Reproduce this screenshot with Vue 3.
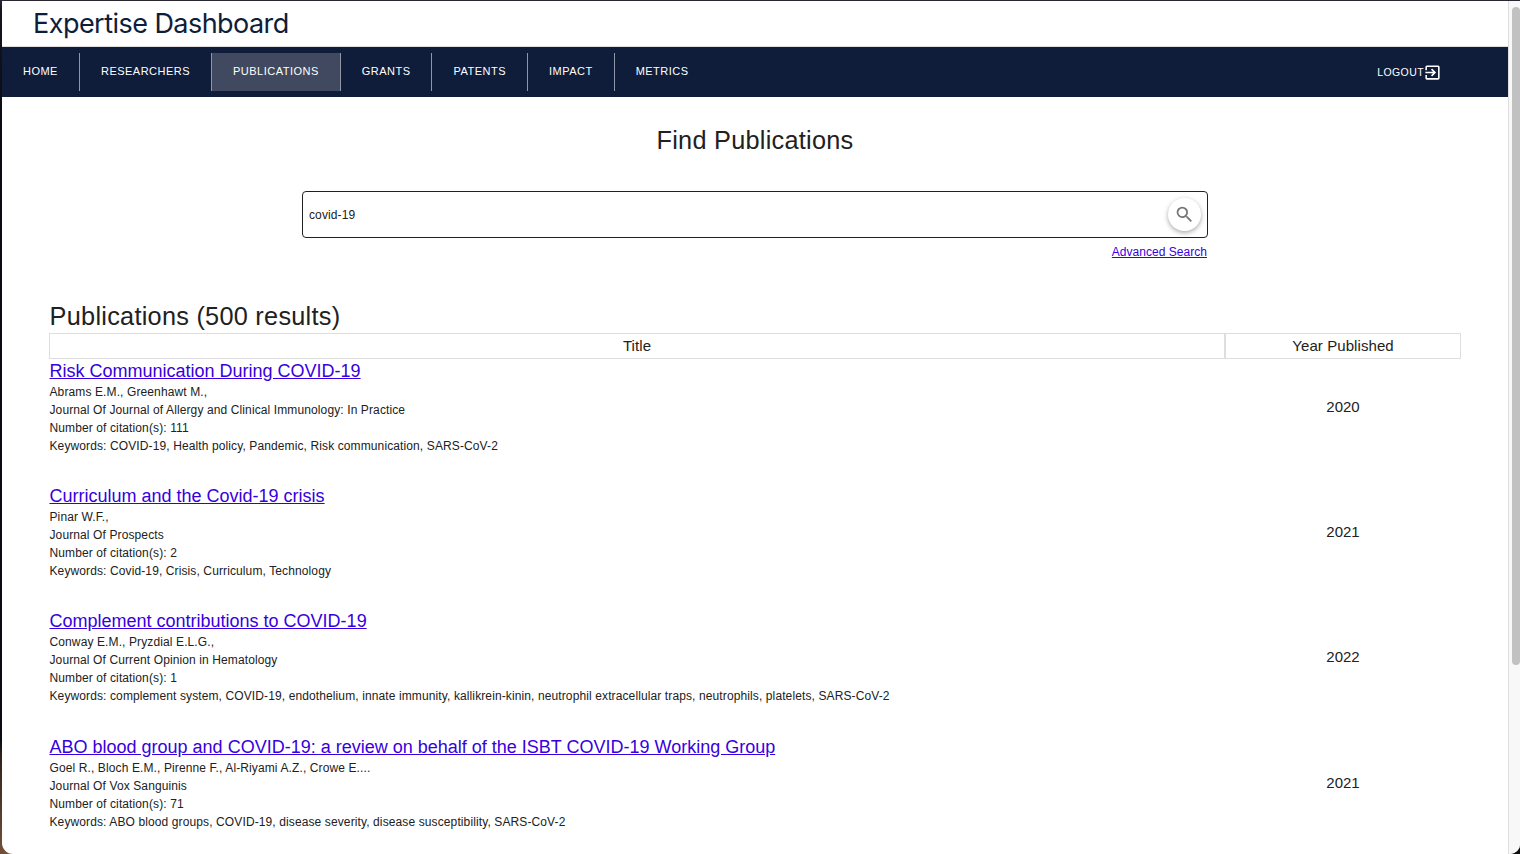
<script setup>
const nav = ['Home', 'Researchers', 'Publications', 'Grants', 'Patents', 'Impact', 'Metrics']
const active = 'Publications'
const publications = [
  {
    title: 'Risk Communication During COVID-19',
    authors: 'Abrams E.M., Greenhawt M.,',
    journal: 'Journal of Allergy and Clinical Immunology: In Practice',
    citations: 111,
    keywords: 'COVID-19, Health policy, Pandemic, Risk communication, SARS-CoV-2',
    year: 2020,
  },
  {
    title: 'Curriculum and the Covid-19 crisis',
    authors: 'Pinar W.F.,',
    journal: 'Prospects',
    citations: 2,
    keywords: 'Covid-19, Crisis, Curriculum, Technology',
    year: 2021,
  },
  {
    title: 'Complement contributions to COVID-19',
    authors: 'Conway E.M., Pryzdial E.L.G.,',
    journal: 'Current Opinion in Hematology',
    citations: 1,
    keywords:
      'complement system, COVID-19, endothelium, innate immunity, kallikrein-kinin, neutrophil extracellular traps, neutrophils, platelets, SARS-CoV-2',
    year: 2022,
  },
  {
    title: 'ABO blood group and COVID-19: a review on behalf of the ISBT COVID-19 Working Group',
    authors: 'Goel R., Bloch E.M., Pirenne F., Al-Riyami A.Z., Crowe E....',
    journal: 'Vox Sanguinis',
    citations: 71,
    keywords: 'ABO blood groups, COVID-19, disease severity, disease susceptibility, SARS-CoV-2',
    year: 2021,
  },
]
</script>

<template>
  <div class="desktop">
    <div class="window">
      <div class="page">
        <header class="brand"><span>Expertise Dashboard</span></header>
        <nav class="bar">
          <a v-for="item in nav" :key="item" class="item" :class="{ active: item === active }">{{ item }}</a>
          <a class="logout">
            <span>Logout</span>
            <svg viewBox="0 0 24 24" width="19" height="19">
              <path fill="currentColor" d="M10.09 15.59L11.5 17l5-5-5-5-1.41 1.41L12.67 11H3v2h9.67l-2.58 2.59zM19 3H5a2 2 0 0 0-2 2v4h2V5h14v14H5v-4H3v4a2 2 0 0 0 2 2h14a2 2 0 0 0 2-2V5a2 2 0 0 0-2-2z" />
            </svg>
          </a>
        </nav>
        <main>
          <h1>Find Publications</h1>
          <div class="search">
            <span>covid-19</span>
            <button type="button" aria-label="Search">
              <svg viewBox="0 0 24 24" width="21" height="21">
                <path fill="currentColor" d="M15.5 14h-.79l-.28-.27A6.47 6.47 0 0 0 16 9.5 6.5 6.5 0 1 0 9.5 16c1.61 0 3.09-.59 4.23-1.57l.27.28v.79l5 4.99L20.49 19l-4.99-5zm-6 0C7.01 14 5 11.99 5 9.5S7.01 5 9.5 5 14 7.01 14 9.5 11.99 14 9.5 14z" />
              </svg>
            </button>
          </div>
          <div class="advanced"><a>Advanced Search</a></div>
          <h2>Publications (500 results)</h2>
          <div class="row head">
            <div>Title</div>
            <div>Year Published</div>
          </div>
          <article v-for="p in publications" :key="p.title" class="row">
            <div class="details">
              <h3>{{ p.title }}</h3>
              <p>{{ p.authors }}</p>
              <p>Journal Of {{ p.journal }}</p>
              <p>Number of citation(s): {{ p.citations }}</p>
              <p>Keywords: {{ p.keywords }}</p>
            </div>
            <div class="year">{{ p.year }}</div>
          </article>
        </main>
      </div>
      <aside class="track"><div class="thumb"></div></aside>
    </div>
  </div>
</template>

<style>
body { margin: 0; overflow: hidden; }
</style>

<style scoped>
.desktop {
  box-sizing: border-box;
  height: 854px;
  padding: 1px 0 0 2px;
  background:
    linear-gradient(#12100f, #12100f) right bottom / 30px 30px no-repeat,
    linear-gradient(#2b2831 0, #14161e 10px, #090c15 120px, #090c15 740px, #30211b 755px, #725039 854px);
  font-family: "Liberation Sans", Arial, sans-serif;
  color: #212121;
}
.window {
  display: flex;
  height: 853px;
  background: #fff;
  border-radius: 0 0 10px 11px;
  overflow: hidden;
}
.page { flex: 1; min-width: 0; }
.brand {
  box-sizing: border-box;
  height: 46px;
  padding-left: 31px;
  border-bottom: 1px solid #dedede;
  font: 400 27px/45px Inter, sans-serif;
  letter-spacing: -0.54px;
  color: #0f1d3a;
}
.bar {
  display: flex;
  align-items: center;
  height: 50px;
  background: #0f1d3a;
  color: #fff;
  font-size: 11px;
  letter-spacing: 0.485px;
  text-transform: uppercase;
}
.item {
  height: 38px;
  padding: 0 21px;
  border-right: 1px solid #8f96a5;
  line-height: 37px;
}
.item.active { background: #414960; box-shadow: -1px 0 #8f96a5; }
.item:nth-child(7) { border-right: 0; }
.logout {
  display: flex;
  align-items: center;
  margin-left: auto;
  margin-right: 66px;
  font-size: 10.5px;
  letter-spacing: 0.4px;
}
.logout svg { margin-left: -1px; }
main { padding: 0 47px; }
h1, h2, h3, p { margin: 0; font-weight: 400; }
h1 {
  padding-top: 28px;
  font-size: 25.3px;
  line-height: 30px;
  letter-spacing: 0.26px;
  text-align: center;
}
.search {
  box-sizing: border-box;
  display: flex;
  align-items: center;
  justify-content: space-between;
  width: 906px;
  height: 47px;
  margin: 36px auto 0;
  padding: 0 6px;
  border: 1px solid #212121;
  border-radius: 4px;
  font-size: 12px;
  letter-spacing: 0.12px;
}
.search button {
  display: flex;
  align-items: center;
  justify-content: center;
  width: 33px;
  height: 33px;
  padding: 0;
  border: 0;
  border-radius: 50%;
  background: #fff;
  color: #757575;
  box-shadow: 0 2px 4px rgba(0, 0, 0, 0.25), 0 1px 6px rgba(0, 0, 0, 0.1);
}
.advanced {
  width: 904px;
  margin: 5px auto 0;
  font-size: 12px;
  line-height: 18px;
  letter-spacing: 0.03px;
  text-align: right;
}
.advanced a, h3 { color: #3700e0; text-decoration: underline; }
h2 {
  padding: 39px 0 1px 0.6px;
  font-size: 25.3px;
  line-height: 32px;
  letter-spacing: 0.26px;
}
.row { display: grid; grid-template-columns: 1176px 236px; }
.head { font-size: 15px; line-height: 24px; letter-spacing: 0.08px; text-align: center; }
.head div { border: 1px solid #dedede; }
article { height: 125.2px; }
.details { padding-left: 0.5px; }
h3 { padding-top: 1px; font-size: 18px; line-height: 23px; }
p { font-size: 12px; line-height: 18px; letter-spacing: 0.113px; }
.year { height: 96px; font-size: 15px; line-height: 96px; text-align: center; }
.track {
  box-sizing: border-box;
  width: 12px;
  padding: 6px 0 0 3px;
  border-left: 1px solid #dedede;
  background: #f8f8f8;
}
.thumb { width: 8px; height: 658px; border-radius: 4px; background: #c1c1c1; }
</style>
